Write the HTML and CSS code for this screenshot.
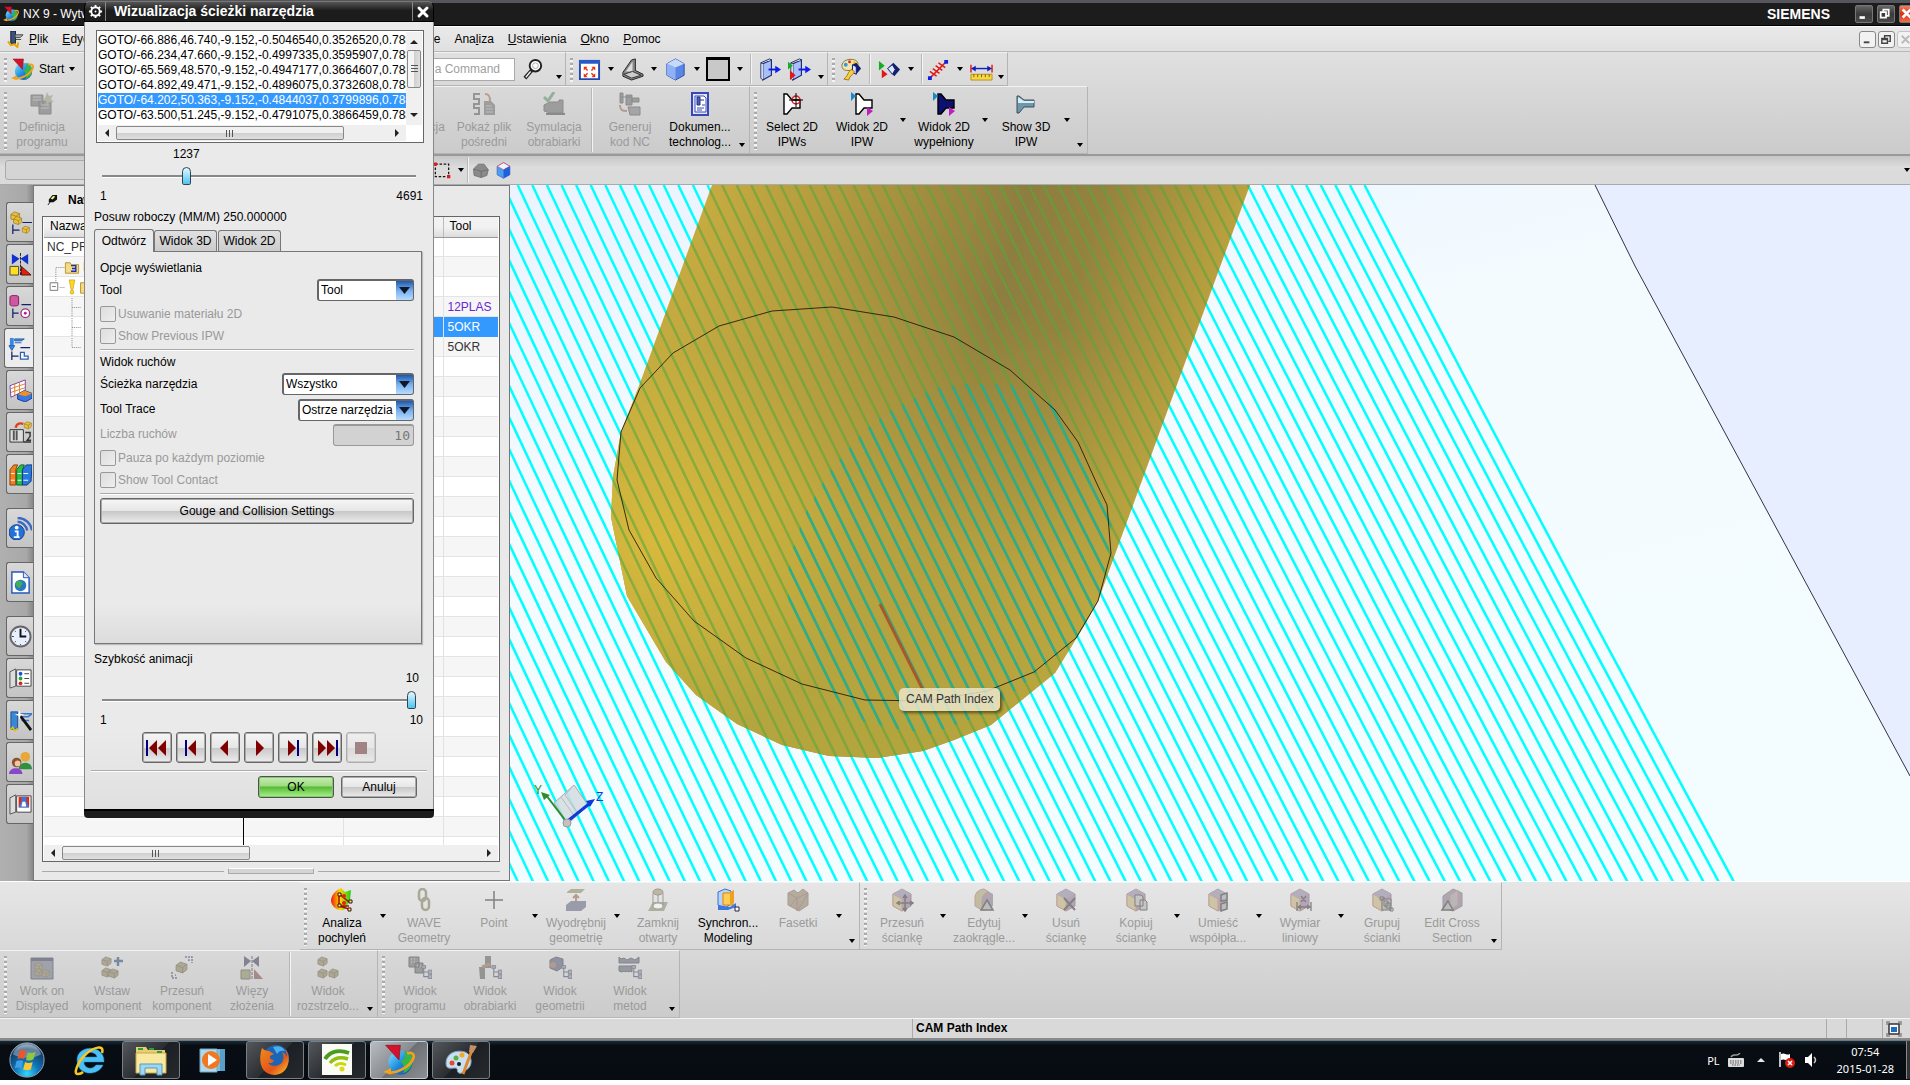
FILE: index.html
```html
<!DOCTYPE html>
<html lang="pl">
<head>
    <meta charset="utf-8">
    <title>NX 9 - Wytwarzanie</title>
    <meta name="viewport" content="width=device-width, initial-scale=1.0">
    <link rel="stylesheet" href="styles.css">
</head>
<body>

<!-- icon sprite -->
<svg class="sprite" aria-hidden="true">
    <defs>
        <linearGradient id="gGlobe" x1="0" y1="0" x2="1" y2="1">
            <stop offset="0" stop-color="#8fe4ff"/><stop offset=".5" stop-color="#1e8fe0"/><stop offset="1" stop-color="#1a3fa0"/>
        </linearGradient>
        <linearGradient id="gHeat" x1="0" y1="0" x2="1" y2="0">
            <stop offset="0" stop-color="#f01c10"/><stop offset=".45" stop-color="#ffd800"/><stop offset="1" stop-color="#18d020"/>
        </linearGradient>
        <linearGradient id="gFox" x1="0" y1="0" x2="1" y2="1">
            <stop offset="0" stop-color="#f08a1c"/><stop offset=".6" stop-color="#e2541a"/><stop offset="1" stop-color="#ffcf2a"/>
        </linearGradient>
        <radialGradient id="gOrb" cx=".5" cy=".9" r=".9">
            <stop offset="0" stop-color="#2fd8ff"/><stop offset=".4" stop-color="#1273b4"/><stop offset=".8" stop-color="#0e3c66"/><stop offset="1" stop-color="#8fa8ba"/>
        </radialGradient>
    </defs>
    <symbol id="nx" viewBox="0 0 24 24">
        <circle cx="13" cy="14" r="9" fill="url(#gGlobe)"/>
        <path d="M13 13c4-2 4-5 3-8 4 1 6 4 6 8s-3 8-7 9c2-3 1-6-2-9z" fill="#35b54a"/>
        <path d="M3 21c6 2 18-4 20-11 .4-3-2-4-5-3" fill="none" stroke="#f0a21c" stroke-width="2"/>
        <path d="M0 21l6-3v5z" fill="#f0a21c"/>
        <path d="M2 1l11 0-1 11z" fill="#d3122c" stroke="#8c0a1c" stroke-width=".5"/>
    </symbol>
    <symbol id="cube" viewBox="0 0 24 24">
        <path d="M12 1l9 5v12l-9 5-9-5V6z" fill="#5c86e4" stroke="#2a4aa8"/>
        <path d="M3 6l9 4v13l-9-5z" fill="#8fb2f6"/><path d="M3 6l9-5 9 5-9 4z" fill="#c6dafc"/>
    </symbol>
    <symbol id="face" viewBox="0 0 24 24">
        <path d="M12 1l9 5v12l-9 5-9-5V6z" fill="#94649a" stroke="#6d5070"/>
        <path d="M3 6l9 5v12l-9-5z" fill="#c0a850" stroke="#c0603c"/><path d="M3 6l9-5 9 5-9 5z" fill="#8878a0"/>
    </symbol>
    <symbol id="brick" viewBox="0 0 12 12">
        <path d="M1 4l4-3 6 2v5l-4 3-6-2z" fill="#e8c040" stroke="#94741c" stroke-width=".8"/>
        <path d="M1 4l6 2v5M7 6l4-3" fill="none" stroke="#94741c" stroke-width=".8"/>
    </symbol>
    <symbol id="greybrick" viewBox="0 0 12 12">
        <path d="M1 4l4-3 6 2v5l-4 3-6-2z" fill="#8c7a48" stroke="#5c4c28" stroke-width=".8"/>
        <path d="M1 4l6 2v5M7 6l4-3" fill="none" stroke="#5c4c28" stroke-width=".8"/>
    </symbol>
    <symbol id="nodes" viewBox="0 0 12 16">
        <path d="M3 4v9h5M3 8h5" fill="none" stroke="#33406a" stroke-width="1.2"/>
        <path d="M1 1h4v3H1zM8 6h4v4H8zM8 11h4v4H8z" fill="#8890a8" stroke="#33406a"/>
    </symbol>
    <symbol id="cone" viewBox="0 0 24 24">
        <path d="M4 2h3l5 6h8v8h-8l-5 6H4z" stroke="#000" stroke-width="1.4"/>
    </symbol>
    <symbol id="plane" viewBox="0 0 24 24">
        <path d="M5 6l9-4v16l-9 5z" fill="#a8c0f8" stroke="#1c2a6c" stroke-width="1.2"/>
        <path d="M5 6L3 5v16l2 2M3 5l9-4 2 1" fill="#fff" stroke="#1c2a6c"/>
        <path d="M11 12h9" stroke="#0a1cf0" stroke-width="2"/><path d="M18 8l6 4-6 4z" fill="#0a1cf0"/>
    </symbol>
    <symbol id="folder" viewBox="0 0 16 14">
        <path d="M1 2h5l1 2h8v9H1z" fill="#f4dc84" stroke="#b8942c"/>
    </symbol>
    <symbol id="book" viewBox="0 0 24 24">
        <path d="M1 5l6-3v18l-6 2z" fill="#ddd" stroke="#555"/><path d="M8 3h15v17H8z" fill="#fff" stroke="#444"/>
    </symbol>
</svg>

<div class="desktop">

    <header class="titlebar">
        <svg class="app-icon"><use href="#nx"/></svg>
        <span class="app-title">NX 9 - Wytwarzanie</span>
        <span class="brand">SIEMENS</span>
        <div class="win-buttons">
            <button class="win-btn" aria-label="Minimalizuj"><svg viewBox="0 0 18 18"><path d="M4 13h6" stroke="#fff" stroke-width="3"/></svg></button>
            <button class="win-btn" aria-label="Przywróć"><svg viewBox="0 0 18 18"><path d="M6 6V4h6v7h-3M3 7h6v6H3z" fill="none" stroke="#fff" stroke-width="2"/></svg></button>
            <button class="win-btn win-close" aria-label="Zamknij"><svg viewBox="0 0 18 18"><path d="M3 4l9 9M12 4l-9 9" stroke="#fff" stroke-width="3"/></svg></button>
        </div>
    </header>

    <nav class="menubar">
        <svg class="menu-icon" viewBox="0 0 18 18"><path d="M4 0h5v13H4z" fill="#3c5078" stroke="#14203c"/><path d="M9 4h8l-3 3H9M9 9h6" stroke="#444" fill="#aaa"/><path d="M1 11l3 4 4-1 3 3 1-5" stroke="#e8a800" stroke-width="2" fill="none"/></svg>
        <a href="#"><u>P</u>lik</a>
        <a href="#"><u>E</u>dycja</a>
        <span class="menu-gap"></span>
        <a href="#">I<u>n</u>formacje</a>
        <a href="#">Ana<u>l</u>iza</a>
        <a href="#"><u>U</u>stawienia</a>
        <a href="#"><u>O</u>kno</a>
        <a href="#"><u>P</u>omoc</a>
        <div class="doc-buttons">
            <button class="doc-btn" aria-label="Minimalizuj dokument"><svg viewBox="0 0 16 16"><path d="M4 11h6" stroke="#444" stroke-width="2"/></svg></button>
            <button class="doc-btn" aria-label="Przywróć dokument"><svg viewBox="0 0 16 16"><path d="M6 6V4h6v6h-2M3 7h6v5H3zM3 8h6" fill="none" stroke="#444" stroke-width="1.5"/></svg></button>
            <button class="doc-btn" aria-label="Zamknij dokument" disabled><svg viewBox="0 0 16 16"><path d="M4 4l8 8M12 4l-8 8" stroke="#bbb" stroke-width="2"/></svg></button>
        </div>
    </nav>

    <div class="ribbon">
        <div class="tb-row small">
            <div class="tb-group">
                <i class="grip"></i>
                <button class="start-cmd"><svg><use href="#nx"/></svg>Start<i class="arrow"></i></button>
                <div class="find-slot"><input class="find" type="text" placeholder="Find a Command" aria-label="Find a Command"></div>
                <button class="ic find-btn" aria-label="Szukaj"><svg viewBox="0 0 24 24"><circle cx="14" cy="8" r="6" fill="#fff" stroke="#222" stroke-width="2"/><circle cx="14" cy="8" r="3" fill="none" stroke="#aaa"/><path d="M10 13l-7 8" stroke="#222" stroke-width="4"/><path d="M9 14l-5 6" stroke="#eee" stroke-width="1.5"/></svg></button>
                <button class="more" aria-label="Więcej"><i class="arrow"></i></button>
            </div>
            <div class="tb-group">
                <i class="grip"></i>
                <button class="ic" aria-label="Dopasuj"><svg viewBox="0 0 24 24"><path d="M2 3h20v19H2z" fill="#fff" stroke="#2048b0" stroke-width="2"/><path d="M1 2h22v4H1z" fill="#2858c8"/><path d="M6 9h4l-4 4zM18 9v4l-4-4zM6 20v-4l4 4zM18 20h-4l4-4z" fill="#e83010"/><path d="M7 10l3 3M17 10l-3 3M7 19l3-3M17 19l-3-3" stroke="#e83010" stroke-width="1.5"/></svg></button>
                <button class="drop" aria-label="Rozwiń"><i class="arrow"></i></button>
                <button class="ic" aria-label="Orientacja"><svg viewBox="0 0 24 24"><path d="M2 15L11 2l4-1v12l8 4v2l-12 4-9-4z" fill="#888" stroke="#222"/><path d="M5 14l7-10v10z" fill="#ddd"/><path d="M3 17l9-3 9 4-10 3z" fill="#ccc" stroke="#333"/></svg></button>
                <button class="drop" aria-label="Rozwiń"><i class="arrow"></i></button>
                <button class="ic" aria-label="Styl renderowania"><svg><use href="#cube"/></svg></button>
                <button class="drop" aria-label="Rozwiń"><i class="arrow"></i></button>
                <button class="ic" aria-label="Tło"><span class="swatch"></span></button>
                <button class="drop" aria-label="Rozwiń"><i class="arrow"></i></button>
                <i class="sep"></i>
                <button class="ic wide" aria-label="Przekrój"><svg><use href="#plane"/></svg></button>
                <button class="ic wide" aria-label="Edytuj przekrój"><svg viewBox="0 0 24 24"><use href="#plane"/><path d="M0 4l5 4-5 4z" fill="#10b020"/><path d="M2 13l6 5-6 5z" fill="#e01818"/></svg></button>
                <button class="more" aria-label="Więcej"><i class="arrow"></i></button>
            </div>
            <div class="tb-group">
                <i class="grip"></i>
                <button class="ic" aria-label="Wyświetlanie"><svg viewBox="0 0 24 24"><path d="M2 8c0-5 7-8 13-6 4 1 5 5 2 7-2 2-5 1-5 4H7C4 13 2 11 2 8z" fill="#f4e4b0" stroke="#887030"/><circle cx="6" cy="7" r="2" fill="#28a0e0"/><circle cx="10" cy="4" r="1.6" fill="#e03020"/><circle cx="15" cy="5" r="1.6" fill="#f0c010"/><path d="M13 7l4-2 5 6-5 6-4-2z" fill="#101c70"/><path d="M13 7v8l4 2V9z" fill="#dce6ff" stroke="#101c70"/><path d="M12 12c-4 2-3 6-8 10l5 1c1-5 6-6 6-9z" fill="#f4d040" stroke="#a07810"/></svg></button>
                <i class="sep roomy"></i>
                <button class="ic" aria-label="Pokaż i ukryj"><svg viewBox="0 0 24 24"><path d="M1 3l6 5-6 5z" fill="#10b020"/><path d="M4 12l6 5-6 4z" fill="#e01818"/><path d="M10 11l6-6 7 7-6 7z" fill="#14206c"/><path d="M10 11l5-4 3 5-3 5z" fill="#dce6ff" stroke="#14206c"/></svg></button>
                <button class="drop" aria-label="Rozwiń"><i class="arrow"></i></button>
                <i class="sep"></i>
                <button class="ic" aria-label="Zmierz"><svg viewBox="0 0 24 24"><path d="M3 21L20 4" stroke="#e01818" stroke-width="1.5"/><path d="M3 14l7 5M6 11l7 5M9 8l7 5M12 5l7 5" stroke="#e01818" stroke-width="1.5"/><path d="M1 19h4v4H1zM18 2h4v4h-4z" fill="#1020e0"/></svg></button>
                <button class="drop" aria-label="Rozwiń"><i class="arrow"></i></button>
                <button class="ic" aria-label="Odległość"><svg viewBox="0 0 24 24"><path d="M1 7v8M23 7v8" stroke="#e01818" stroke-width="1.5"/><path d="M3 11h18" stroke="#1020c0" stroke-width="1.5"/><path d="M1 11l5-3v6zM23 11l-5-3v6z" fill="#1020c0"/><path d="M1 17h22v6H1z" fill="#f4d848" stroke="#b89010"/><path d="M4 17v3M8 17v3M12 17v3M16 17v3M20 17v3" stroke="#806000"/></svg></button>
                <button class="more" aria-label="Więcej"><i class="arrow"></i></button>
            </div>
        </div>

        <div class="tb-row">
            <div class="tb-group">
                <i class="grip"></i>
                <button class="cmd" disabled><svg viewBox="0 0 24 24"><path d="M1 3h12v11H1zM9 9h12v13H9z" fill="#686868" stroke="#444"/><path d="M3 5h8M3 8h8M11 13h8M11 16h8" stroke="#aaa"/><path d="M17 0l2 4 4-1-2 4 3 3-5 0-2 4-1-5-4-1 3-2z" fill="#9a9468"/></svg>Definicja programu</button>
                <span class="tb-gap"></span>
                <button class="cmd" disabled><svg viewBox="0 0 24 24"><path d="M4 4h16v16H4z" fill="#888"/></svg>Weryfikacja ścieżki</button>
                <button class="cmd" disabled><svg viewBox="0 0 24 24"><path d="M8 2H2v5h5v5H2v4h5v6H2" fill="none" stroke="#555" stroke-width="2"/><path d="M12 9h7l4 4v10H12z" fill="#666"/><path d="M14 14h6M14 17h7M14 20h7" stroke="#aaa"/><path d="M13 2c4 0 5 2 5 7" fill="none" stroke="#a86038" stroke-width="2"/></svg>Pokaż plik pośredni</button>
                <button class="cmd" disabled><svg viewBox="0 0 24 24"><path d="M2 13l6-3h9v-2h4v13H8l-6-2z" fill="#666" stroke="#444"/><path d="M4 22h19" stroke="#444" stroke-width="2"/><path d="M2 5l4 4 6-9" fill="none" stroke="#3f8f50" stroke-width="3"/></svg>Symulacja obrabiarki</button>
                <i class="sep"></i>
                <button class="cmd" disabled><svg viewBox="0 0 24 24"><path d="M2 1h3v10H2zM2 5h12M8 3h6v10H8zM14 6h7v4h-7z" fill="#666" stroke="#444"/><path d="M10 15h12v8H12z" fill="#777" stroke="#444"/><path d="M2 13c0 5 2 6 7 6" fill="none" stroke="#a86038" stroke-width="2"/></svg>Generuj kod&nbsp;NC</button>
                <button class="cmd"><svg viewBox="0 0 24 24"><path d="M4 1h16v22H4z" fill="#dfe6fc" stroke="#3848b8" stroke-width="2"/><path d="M7 4h9l2 2v14H7z" fill="#fff" stroke="#3848b8"/><path d="M9 5h3v8H9zM12 8h4" stroke="#24307c" fill="#4860c0"/><path d="M9 16h7M9 18h5M14 13h3" stroke="#3848b8"/></svg>Dokumen... technolog...</button>
                <button class="more" aria-label="Więcej"><i class="arrow"></i></button>
            </div>
            <div class="tb-group">
                <i class="grip"></i>
                <button class="cmd"><svg viewBox="0 0 24 24"><use href="#cone" fill="#fff"/><circle cx="16" cy="8" r="4" fill="none" stroke="#e01818" stroke-width="1.5"/><path d="M16 1v14M9 8h14" stroke="#000"/></svg>Select 2D IPWs</button>
                <button class="cmd"><svg viewBox="0 0 24 24"><use href="#cone" fill="#fff" x="2"/><path d="M1 0l5 4-5 5z" fill="#1888c8"/><path d="M17 15l6 4-6 5z" fill="#c020c0"/></svg>Widok 2D IPW</button>
                <button class="drop" aria-label="Rozwiń"><i class="arrow"></i></button>
                <button class="cmd"><svg viewBox="0 0 24 24"><use href="#cone" fill="#0c1070" x="2"/><path d="M1 0l5 4-5 5z" fill="#1888c8"/><path d="M17 15l6 4-6 5z" fill="#c020c0"/></svg>Widok 2D wypełniony</button>
                <button class="drop" aria-label="Rozwiń"><i class="arrow"></i></button>
                <button class="cmd"><svg viewBox="0 0 24 24"><path d="M3 4h2l5 4h10v7H10l-5 6H3z" fill="#6f97ab" stroke="#38505c"/><path d="M4 5l6 4h10v2H4z" fill="#d8ecf6"/></svg>Show 3D IPW</button>
                <button class="drop" aria-label="Rozwiń"><i class="arrow"></i></button>
                <button class="more" aria-label="Więcej"><i class="arrow"></i></button>
            </div>
        </div>
    </div>

    <div class="selection-bar">
        <div class="sel-field"></div>
        <button class="ic" aria-label="Prostokąt wyboru"><svg viewBox="0 0 24 24"><path d="M4 5h16v15H4z" fill="none" stroke="#111" stroke-width="1.5" stroke-dasharray="3 2"/><path d="M2 3h4v4H2zM18 18h4v4h-4z" fill="#e01818"/></svg></button>
        <button class="drop" aria-label="Rozwiń"><i class="arrow"></i></button>
        <i class="sep"></i>
        <button class="ic sm" aria-label="Bryła"><svg viewBox="0 0 24 24"><path d="M2 10l7-7h8l6 8-2 8-8 3-10-3z" fill="#8a8a8a" stroke="#666"/><path d="M2 10l11 3v9M13 13l10-2" fill="none" stroke="#666"/></svg></button>
        <button class="ic sm" aria-label="Krawędzie"><svg viewBox="0 0 24 24"><path d="M12 1l9 5v12l-9 5-9-5V6z" fill="#48a0f0" stroke="#4060c0"/><path d="M3 6l9-5 9 5-9 5z" fill="#f0f4ff" stroke="#e04060"/><path d="M12 11v12l9-5V6z" fill="#2060d8"/></svg></button>
        <i class="arrow bar-end"></i>
    </div>

    <main class="workspace">
        <aside class="rail">
            <button class="rail-tab" aria-label="Nawigator złożenia"><svg viewBox="0 0 24 24"><use href="#brick" x="1" y="0" width="11" height="11"/><use href="#brick" x="4" y="5" width="10" height="10"/><use href="#brick" x="13" y="15" width="9" height="9"/><path d="M4 14v10M4 20h7M14 12h10" stroke="#14206c" stroke-width="1.3"/></svg></button>
            <button class="rail-tab" aria-label="Nawigator więzów"><svg viewBox="0 0 24 24"><path d="M3 1l8 5-8 6zM20 1l-8 5 8 6z" fill="#1030d0"/><path d="M1 14h9v9H1z" fill="#ffe020" stroke="#444"/><path d="M13 14v9h10z" fill="#e02010" stroke="#601008"/><path d="M12 0v24" stroke="#222" stroke-dasharray="3 1"/></svg></button>
            <button class="rail-tab" aria-label="Nawigator części"><svg viewBox="0 0 24 24"><path d="M1 2c0-2 9-2 9 0v8c0 2-9 2-9 0z" fill="#d058a0" stroke="#7a2060"/><path d="M4 14v10M4 19h6M13 10h10" stroke="#14206c" stroke-width="1.3"/><circle cx="17" cy="19" r="4.5" fill="#fff" stroke="#a03080" stroke-width="1.3"/><circle cx="17" cy="19" r="1.5" fill="#a03080"/></svg></button>
            <button class="rail-tab active" aria-label="Nawigator operacji"><svg viewBox="0 0 24 24"><path d="M2 1h4v9H2z" fill="#3a8ae0"/><path d="M1 9h6l-3 5zM7 2h10l-3 2H7zM7 6h7" fill="#3a8ae0" stroke="#2860b0"/><path d="M4 15v9M4 20h7M13 11h10" stroke="#14206c" stroke-width="1.3"/><path d="M13 16h4v4h4v3h-8z" fill="#fff" stroke="#2860b0" stroke-width="1.3"/></svg></button>
            <button class="rail-tab" aria-label="Obrabiarka"><svg viewBox="0 0 24 24"><path d="M1 7l16-6v11L2 19z" fill="#fff" stroke="#7a40b0"/><path d="M2 10l15-5M2 14l15-5M6 5v12M11 3v12" stroke="#e08030"/><path d="M9 16l7-4 8 3v5l-7 4-8-3z" fill="#3878e0" stroke="#1c3c90"/><path d="M9 16l7-4 8 3-7 3z" fill="#f09020"/></svg></button>
            <button class="rail-tab" aria-label="Symulacja"><svg viewBox="0 0 24 24"><path d="M1 9h14v13H1z" fill="#ddd" stroke="#333"/><path d="M5 10v10M8 10v10" stroke="#555" stroke-width="2"/><path d="M7 7c1-5 5-5 8-4" fill="none" stroke="#e04018" stroke-width="2.5"/><use href="#brick" x="15" y="0" width="9" height="9"/><path d="M17 12h5v4l-3 4h4M15 22h8" fill="none" stroke="#333" stroke-width="1.5"/></svg></button>
            <button class="rail-tab" aria-label="Biblioteka"><svg viewBox="0 0 24 24"><path d="M1 7l4-5h4L7 7v16H1z" fill="#f08020" stroke="#884008"/><path d="M8 7l4-5h4l-2 5v16H8z" fill="#28c048" stroke="#106020"/><path d="M14 7l4-5h6l-1 17-4 4h-5z" fill="#2878e0" stroke="#103880"/><path d="M2 11h4M9 11h4M15 11h5M2 18h4M9 18h4M15 18h5" stroke="#fff"/></svg></button>
            <button class="rail-tab spaced" aria-label="Informacje"><svg viewBox="0 0 24 24"><circle cx="8" cy="16" r="8" fill="#2272d8" stroke="#0c3c88"/><path d="M6 15h3v6M5 21h6" stroke="#fff" stroke-width="2" fill="none"/><circle cx="8" cy="11" r="2" fill="#fff"/><path d="M9 5c5 0 9 4 10 9M9 1c8 0 14 6 15 13" fill="none" stroke="#3a68c0" stroke-width="2.5"/></svg></button>
            <button class="rail-tab spaced" aria-label="Przeglądarka"><svg viewBox="0 0 24 24"><path d="M3 1h12l6 6v16H3z" fill="#fff" stroke="#2858b8" stroke-width="1.5"/><path d="M15 1v6h6" fill="#dce8ff" stroke="#2858b8"/><circle cx="12" cy="15" r="6" fill="#2878c8"/><path d="M8 11c3-2 6 0 6 2s-3 2-2 5c-4 0-6-4-4-7z" fill="#40b050"/></svg></button>
            <button class="rail-tab spaced" aria-label="Historia"><svg viewBox="0 0 24 24"><circle cx="12" cy="12" r="10.5" fill="#e8f0ff" stroke="#666" stroke-width="2"/><path d="M12 4v8h6" fill="none" stroke="#111" stroke-width="2"/><path d="M12 20v1M3 12h2M6 6l1 1M18 6l-1 1M6 18l1-1M18 18l-1-1" stroke="#333"/></svg></button>
            <button class="rail-tab" aria-label="Materiały"><svg viewBox="0 0 24 24"><use href="#book"/><circle cx="12" cy="7" r="2" fill="#2050e0"/><circle cx="12" cy="12" r="2" fill="#18b030"/><circle cx="12" cy="17" r="2" fill="#e02020"/><path d="M16 7h5M16 12h5M16 17h5" stroke="#444"/></svg></button>
            <button class="rail-tab" aria-label="Kreator"><svg viewBox="0 0 24 24"><path d="M2 3h7v18H2z" fill="#3888d8" stroke="#205090"/><path d="M11 5h13l-4 3h-6M13 12h8" stroke="#3a78d0" fill="none" stroke-width="1.5"/><path d="M11 6l12 16" stroke="#111" stroke-width="3"/><path d="M11 1l1 4 4 1-4 1-1 4-1-4-4-1 4-1z" fill="#fff"/><path d="M1 22l3-3 2 4 3-3" stroke="#f0c010" stroke-width="1.5" fill="none"/></svg></button>
            <button class="rail-tab" aria-label="Role"><svg viewBox="0 0 24 24"><circle cx="17" cy="6" r="5" fill="#e8a838"/><path d="M10 19c0-9 14-9 14 0z" fill="#2f9040"/><circle cx="8" cy="12" r="5" fill="#8a5038"/><circle cx="9" cy="13" r="3" fill="#f0c8a0"/><path d="M0 24c0-8 14-8 14 0z" fill="#8848c8"/></svg></button>
            <button class="rail-tab" aria-label="Szablony"><svg viewBox="0 0 24 24"><use href="#book"/><path d="M10 4h11v11H10z" fill="#e02818"/><path d="M13 4h5v4l3 7H10l3-7z" fill="#3878d8"/><path d="M14 9l3 0 1 5h-5z" fill="#fff"/></svg></button>
        </aside>

        <section class="navigator">
            <h2 class="nav-title"><svg viewBox="0 0 12 12"><path d="M2 6l4-5h5v5L7 9H2z" fill="#111"/><path d="M4 5l3-3 2 1-3 3z" fill="#f0f080"/><path d="M4 8l-3 4" stroke="#111"/></svg>Nawigator operacji</h2>
            <div class="tree-box">
                <div class="tree-scroll">
                    <table class="tree">
                        <thead>
                            <tr><th class="c-name">Nazwa</th><th class="c-mid"></th><th class="c-mid"></th><th>Tool</th></tr>
                        </thead>
                        <tbody>
                            <tr><td>NC_PROGRAM</td><td></td><td></td><td></td></tr>
                            <tr><td><svg class="tree-ic" viewBox="0 0 50 20"><path d="M8 20V10h10" fill="none" stroke="#888" stroke-dasharray="1 1"/><use href="#folder" x="17" y="3" width="16" height="14"/><path d="M24 8h5v6h-5M25 11h4" fill="none" stroke="#1830c0" stroke-width="1.5"/></svg>NIEUŻYTE</td><td></td><td></td><td></td></tr>
                            <tr><td><svg class="tree-ic" viewBox="0 0 50 20"><path d="M8 0v5M12 10h5" stroke="#888" stroke-dasharray="1 1"/><path d="M2 5h8v8H2zM4 9h4" fill="#fff" stroke="#777"/><path d="M22 2h6l-2 10h-2z" fill="#ffd820" stroke="#a88000" stroke-width=".5"/><circle cx="25" cy="15" r="2" fill="#ffd820" stroke="#a88000" stroke-width=".5"/><use href="#folder" x="33" y="3" width="16" height="14"/></svg></td><td></td><td></td><td></td></tr>
                            <tr><td><svg class="tree-ic" viewBox="0 0 50 20"><path d="M25 0v20M25 10h10" stroke="#888" stroke-dasharray="1 1"/></svg></td><td></td><td></td><td class="violet">12PLAS</td></tr>
                            <tr class="picked"><td><svg class="tree-ic" viewBox="0 0 50 20"><path d="M25 0v20M25 10h10" stroke="#888" stroke-dasharray="1 1"/></svg></td><td></td><td></td><td>5OKR</td></tr>
                            <tr><td><svg class="tree-ic" viewBox="0 0 50 20"><path d="M25 0v10h10" fill="none" stroke="#888" stroke-dasharray="1 1"/></svg></td><td></td><td></td><td>5OKR</td></tr>
                            <tr class="rest"><td></td><td></td><td></td><td></td></tr>
                        </tbody>
                    </table>
                </div>
                <div class="hbar"><i class="tri left"></i><div class="hbar-track"><div class="hbar-thumb nav-thumb"></div></div><i class="tri right"></i></div>
            </div>
            <div class="splitter"><i></i></div>
        </section>

        <section class="viewport">
            <svg class="scene" viewBox="510 185 1400 697" preserveAspectRatio="xMinYMin slice">
                <defs>
                    <linearGradient id="bg" x1="0" y1="0" x2=".5" y2="1">
                        <stop offset="0" stop-color="#eaf3ff"/><stop offset=".4" stop-color="#f3fbff"/><stop offset="1" stop-color="#f3fcff"/>
                    </linearGradient>
                    <linearGradient id="body" gradientUnits="userSpaceOnUse" x1="680" y1="300" x2="1190" y2="440">
                        <stop offset="0" stop-color="#c6ab40"/><stop offset=".25" stop-color="#b0993f"/><stop offset=".58" stop-color="#8d7d40"/><stop offset=".72" stop-color="#94833f"/><stop offset="1" stop-color="#bda43f"/>
                    </linearGradient>
                    <linearGradient id="fade" gradientUnits="userSpaceOnUse" x1="960" y1="290" x2="800" y2="760">
                        <stop offset="0" stop-color="#bda63f" stop-opacity="0"/><stop offset=".5" stop-color="#c2ab40" stop-opacity=".75"/><stop offset="1" stop-color="#b3a53e"/>
                    </linearGradient>
                    <radialGradient id="shine" gradientUnits="userSpaceOnUse" cx="660" cy="540" r="200">
                        <stop offset="0" stop-color="#d8b93c"/><stop offset="1" stop-color="#d0b83e" stop-opacity="0"/>
                    </radialGradient>
                    <path id="cutter" d="M712 185L639 386 621 432 613 477 611 517 627 596 666 662 696 695 737 724 782 745 829 756 877 758 923 751 954 740 991 725 1055 673 1084 626 1098 601 1118 546 1250 185z"/>
                    <clipPath id="inCutter"><use href="#cutter"/></clipPath>
                    <clipPath id="inContact"><path d="M934 389L962 384 1010 385 1041 399 1061 410 1087 452 1110 501 1112 537 1099 597 1076 640 1034 675 990 712 931 734 898 729 865 722 844 709 798 644 788 602 788 571 793 548 806 512 829 472 865 430 888 412 911 400z"/></clipPath>
                    <path id="passes"/>
                </defs>
                <path d="M510 185h1400v697H510z" fill="url(#bg)"/>
                <path d="M1595 185L1635 266 1910 776V185z" fill="#e6eeff"/>
                <path d="M1595 185L1635 266 1910 776" fill="none" stroke="#334" stroke-width="1"/>
                <use href="#passes" class="pass"/>
                <use href="#cutter" fill="url(#body)"/>
                <use href="#cutter" fill="url(#fade)"/>
                <use href="#cutter" fill="url(#shine)"/>
                <g clip-path="url(#inCutter)"><use href="#passes" class="pass-hidden"/></g>
                <g clip-path="url(#inContact)"><use href="#passes" class="pass-contact"/></g>
                <path class="rim" d="M640 388L673 353 719 326 772 311 832 307 894 317 954 337 1010 370 1055 410 1078 442 1097 484 1107 505 1111 553 1098 601 1076 638 1034 672 987 691 926 701 865 700 802 684 746 658 694 621 656 578 629 530 617 480 621 432z"/>
                <path d="M880 604l43 86" stroke="#a8582a" stroke-width="3"/>
                <g class="triad">
                    <path d="M554 803l20-18 14 20-20 19z" fill="#d4dce0" fill-opacity=".85" stroke="#aaa"/>
                    <path d="M561 797l14 20M574 785l-9 10 13 18" fill="none" stroke="#bbb"/>
                    <path d="M565 820l-19-25" stroke="#2c8c2c" stroke-width="2"/><path d="M541 792l9 3-6 5z" fill="#2c8c2c"/>
                    <path d="M569 820l20-16" stroke="#1038d8" stroke-width="3"/><path d="M595 799l-9 2 4 6z" fill="#1038d8"/>
                    <circle cx="567" cy="823" r="4" fill="#c8c0c0" stroke="#999"/>
                    <text x="534" y="794" fill="#2c8c2c">Y</text><text x="596" y="801" fill="#1038d8">Z</text>
                </g>
            </svg>
            <div class="tip">CAM Path Index</div>
        </section>
    </main>

    <div class="ribbon bottom">
        <div class="tb-row indent">
            <div class="tb-group">
                <i class="grip"></i>
                <button class="cmd"><svg viewBox="0 0 24 24"><path d="M1 13C1 7 6 2 11 0l4 4 6-2-1 11-6 9C7 23 2 19 1 13z" fill="url(#gHeat)"/><path d="M9 6v12h10M9 6l10 8M9 18l10 3" fill="none" stroke="#a01010" stroke-width="1.5"/><path d="M8 5h3v3H8zM8 16h3v3H8zM19 12h3v3h-3zM18 20h3v3h-3z" fill="#ffe890" stroke="#401008"/><circle cx="14" cy="8" r="2" fill="#e82010"/><circle cx="14" cy="15" r="2" fill="#e82010"/></svg>Analiza pochyleń</button>
                <button class="drop" aria-label="Rozwiń"><i class="arrow"></i></button>
                <button class="cmd" disabled><svg viewBox="0 0 24 24"><rect x="7" y="1" width="7" height="12" rx="3.5" fill="none" stroke="#707040" stroke-width="2.5"/><rect x="10" y="10" width="7" height="12" rx="3.5" fill="none" stroke="#707040" stroke-width="2.5"/></svg>WAVE Geometry</button>
                <button class="cmd" disabled><svg viewBox="0 0 24 24"><path d="M12 3v18M3 12h18" stroke="#222" stroke-width="1.5"/></svg>Point</button>
                <button class="drop" aria-label="Rozwiń"><i class="arrow"></i></button>
                <button class="cmd" disabled><svg viewBox="0 0 24 24"><path d="M3 4l4-3h14l-4 4H3z" fill="#808040"/><path d="M12 7v8M9 10l3-3 3 3" stroke="#a05030" stroke-width="2" fill="none"/><path d="M2 17l5-4h15v6l-5 4H2z" fill="#50587c"/></svg>Wyodrębnij geometrię</button>
                <button class="drop" aria-label="Rozwiń"><i class="arrow"></i></button>
                <button class="cmd" disabled><svg viewBox="0 0 24 24"><path d="M2 23l5-9h15l-4 9z" fill="#808050"/><ellipse cx="12" cy="4" rx="5" ry="3" fill="#90904c" stroke="#883c30"/><ellipse cx="12" cy="18" rx="5" ry="3" fill="#fff" stroke="#666"/><path d="M7 5v12M17 5v12M12 7v8" stroke="#555"/></svg>Zamknij otwarty</button>
                <button class="cmd"><svg viewBox="0 0 24 24"><path d="M2 4l7-3 6 2v13l-6 4-7-3z" fill="#b8d4fc" stroke="#3870d0"/><path d="M7 5h10v12H7z" fill="#ffd050" stroke="#e08010"/><path d="M14 4l4-2v12l-4 3z" fill="#f0a020"/><path d="M2 17l12 2 6-4v4l-8 3H2z" fill="#3c78e0"/><path d="M19 19h4v4h-4z" fill="#fff" stroke="#224"/></svg>Synchron... Modeling</button>
                <button class="cmd" disabled><svg viewBox="0 0 24 24"><path d="M2 5l6-3 4 3 5-4 5 4v12l-9 6-11-6z" fill="#8a7850" stroke="#805038"/><path d="M2 5l9 5v13M11 10l11-5M11 10l-7 8M12 22l9-15" stroke="#904830" fill="none"/></svg>Fasetki</button>
                <button class="drop" aria-label="Rozwiń"><i class="arrow"></i></button>
                <button class="more" aria-label="Więcej"><i class="arrow"></i></button>
            </div>
            <div class="tb-group">
                <i class="grip"></i>
                <button class="cmd" disabled><svg viewBox="0 0 24 24"><use href="#face"/><path d="M15 8v15M8 15h15M13 10l2-3 2 3M13 20l2 3 2-3M10 13l-3 2 3 2M20 13l3 2-3 2" fill="none" stroke="#222" stroke-width="1.5"/></svg>Przesuń ściankę</button>
                <button class="drop" aria-label="Rozwiń"><i class="arrow"></i></button>
                <button class="cmd" disabled><svg viewBox="0 0 24 24"><path d="M3 18V9c0-5 5-8 9-8l9 5v12l-9 5z" fill="#806890"/><path d="M3 9c0-4 5-8 9-8l5 3c-4 0-7 4-7 9v9l-7-4z" fill="#a89850" stroke="#b0603c"/><path d="M15 12l6 10H9z" fill="#999" stroke="#222" stroke-width="1.5"/></svg>Edytuj zaokrągle...</button>
                <button class="drop" aria-label="Rozwiń"><i class="arrow"></i></button>
                <button class="cmd" disabled><svg viewBox="0 0 24 24"><use href="#face"/><path d="M10 10l11 12M21 10L10 22" stroke="#222" stroke-width="2"/></svg>Usuń ściankę</button>
                <button class="cmd" disabled><svg viewBox="0 0 24 24"><use href="#face"/><path d="M11 7h6l2 2v9h-8zM16 12h5l2 2v8h-7z" fill="#aaa" stroke="#222"/></svg>Kopiuj ściankę</button>
                <button class="drop" aria-label="Rozwiń"><i class="arrow"></i></button>
                <button class="cmd" disabled><svg viewBox="0 0 24 24"><use href="#face"/><path d="M15 7l6-2v7l-6 1zM15 16l6-2v7l-6 2z" fill="#999" stroke="#222" stroke-width="1.5"/></svg>Umieść współpła...</button>
                <button class="drop" aria-label="Rozwiń"><i class="arrow"></i></button>
                <button class="cmd" disabled><svg viewBox="0 0 24 24"><use href="#face"/><path d="M9 14v9M23 14v9M10 19h12M13 17l-3 2 3 2M19 17l3 2-3 2M13 8l5 6M18 8l-5 6" fill="none" stroke="#222" stroke-width="1.3"/></svg>Wymiar liniowy</button>
                <button class="drop" aria-label="Rozwiń"><i class="arrow"></i></button>
                <button class="cmd" disabled><svg viewBox="0 0 24 24"><use href="#face"/><path d="M12 11h9v11h-9z" fill="#999" stroke="#222"/><path d="M14 13h4v5h-4zM16 15h4v5h-4zM10 9h4v3h-4zM20 20h3v3h-3z" fill="none" stroke="#222"/></svg>Grupuj ścianki</button>
                <button class="cmd" disabled><svg viewBox="0 0 24 24"><path d="M3 8l10-7 9 4v13l-9 5-10-3z" fill="#786c8c" stroke="#605070"/><path d="M10 7l8-5v15l-8 5z" fill="#998890" stroke="#b0603c"/><path d="M8 13l5 9H2z" fill="#999" stroke="#222" stroke-width="1.5"/></svg>Edit&nbsp;Cross Section</button>
                <button class="more" aria-label="Więcej"><i class="arrow"></i></button>
            </div>
        </div>
        <div class="tb-row">
            <div class="tb-group">
                <i class="grip"></i>
                <button class="cmd" disabled><svg viewBox="0 0 24 24"><path d="M1 2h22v21H1z" fill="#6a7088" stroke="#28305c"/><path d="M1 2h22v3H1z" fill="#28305c"/><use href="#greybrick" x="4" y="6" width="9" height="9"/><use href="#greybrick" x="4" y="12" width="9" height="9"/><use href="#greybrick" x="11" y="13" width="9" height="9"/></svg>Work on Displayed</button>
                <button class="cmd" disabled><svg viewBox="0 0 24 24"><use href="#greybrick" x="1" y="0" width="11" height="11"/><use href="#greybrick" x="1" y="11" width="11" height="11"/><use href="#greybrick" x="8" y="12" width="11" height="11"/><path d="M18 1v9M14 5h9" stroke="#104080" stroke-width="2.5"/></svg>Wstaw komponent</button>
                <button class="cmd" disabled><svg viewBox="0 0 24 24"><use href="#greybrick" x="5" y="5" width="13" height="13"/><path d="M15 1h7v6M18 4h1v1M2 16v6h6M5 19h1" fill="none" stroke="#303c78" stroke-width="1.5" stroke-dasharray="2 1"/></svg>Przesuń komponent</button>
                <button class="cmd" disabled><svg viewBox="0 0 24 24"><path d="M4 0l7 5-7 6zM19 0l-7 5 7 6z" fill="#303060"/><path d="M1 14h9v9H1z" fill="#888840" stroke="#444"/><path d="M14 13v10h9z" fill="#884038"/><path d="M12 0v24" stroke="#222" stroke-dasharray="3 1"/></svg>Więzy złożenia</button>
                <i class="sep"></i>
                <button class="cmd" disabled><svg viewBox="0 0 24 24"><use href="#greybrick" x="1" y="0" width="11" height="11"/><use href="#greybrick" x="1" y="12" width="11" height="11"/><use href="#greybrick" x="12" y="12" width="11" height="11"/></svg>Widok rozstrzelo...</button>
                <button class="more" aria-label="Więcej"><i class="arrow"></i></button>
            </div>
            <div class="tb-group">
                <i class="grip"></i>
                <button class="cmd" disabled><svg viewBox="0 0 24 24"><path d="M1 1h10v10H1zM7 7h8v10H7z" fill="#666" stroke="#333"/><path d="M3 3h1M6 3h1M3 6h1M6 6h1M9 10h1M12 10h1" stroke="#ccc"/><use href="#nodes" x="13" y="8" width="11" height="16"/></svg>Widok programu</button>
                <button class="cmd" disabled><svg viewBox="0 0 24 24"><path d="M7 0h6v12H7z" fill="#555"/><path d="M1 11h6v12H2z" fill="#555"/><path d="M4 11l8-3" stroke="#a06030" stroke-width="3"/><use href="#nodes" x="13" y="8" width="11" height="16"/></svg>Widok obrabiarki</button>
                <button class="cmd" disabled><svg viewBox="0 0 24 24"><path d="M2 4l6-3 7 2v8l-6 4-7-3z" fill="#485080" stroke="#283050"/><circle cx="5" cy="9" r="3" fill="#a06030"/><use href="#nodes" x="13" y="8" width="11" height="16"/></svg>Widok geometrii</button>
                <button class="cmd" disabled><svg viewBox="0 0 24 24"><path d="M1 1l2 2 3-1 3 2 4-2 4 2 4-3v6H1zM1 10h13v6l-2-1-1 1-2-1-1 1-2-1-2 1-3-1z" fill="#556070" stroke="#28384c"/><use href="#nodes" x="13" y="8" width="11" height="16"/></svg>Widok metod</button>
                <button class="more" aria-label="Więcej"><i class="arrow"></i></button>
            </div>
        </div>
    </div>

    <div class="statusbar">
        <div class="cue"></div>
        <div class="status">CAM Path Index</div>
        <div class="cell-a"></div>
        <div class="cell-b"></div>
        <button class="cell-c" aria-label="Pełny ekran"><svg viewBox="0 0 16 16"><path d="M1 4V1h3M12 1h3v3M15 12v3h-3M4 15H1v-3" fill="none" stroke="#888" stroke-width="1.5"/><path d="M3 3h10v10H3z" fill="#fff" stroke="#333" stroke-width="1.5"/><path d="M5 6h6v5H5z" fill="#1c6cc8"/></svg></button>
    </div>

    <footer class="taskbar">
        <button class="orb" aria-label="Start systemu"><svg viewBox="0 0 40 40"><circle cx="20" cy="20" r="18" fill="url(#gOrb)" stroke="#9ab" stroke-width="1"/><path d="M5 14a16 16 0 0 1 30 0c-8 5-22 5-30 0z" fill="#fff" opacity=".35"/><path d="M12 11c3-2 5-1 7 0l-2 8c-3-1-5-1-7 0z" fill="#f0542c"/><path d="M21 12c3 1 5 1 8-1l-2 8c-3 2-5 2-8 1z" fill="#90c83c"/><path d="M9 21c3-1 5-1 7 0l-2 8c-3-2-5-1-7 0z" fill="#3ca0e8"/><path d="M18 22c3 2 5 1 8 0l-2 8c-3 1-5 1-8 0z" fill="#fcc832"/></svg></button>
        <button class="task" aria-label="Internet Explorer"><svg viewBox="0 0 32 32"><path fill-rule="evenodd" d="M31 18H11c0 7 9 8 12 3h7c-5 12-26 11-26-5C4 0 32 0 31 18zM24 13c-1-6-12-6-13 0z" fill="#4cc0f4" stroke="#2088d0" stroke-width=".5"/><path d="M29 9c3-9-9-6-17 2S0 31 5 30c2 0 4-1 5-2" fill="none" stroke="#f8c820" stroke-width="2.5"/></svg></button>
        <button class="task open" aria-label="Eksplorator"><svg viewBox="0 0 32 32"><path d="M1 3h10l2 3h17v22H1z" fill="#e8cc70"/><path d="M1 9h30v20H1z" fill="#f8e8a0" stroke="#c8a850"/><path d="M3 5h5M14 5h5M22 8h5" stroke="#28a040" stroke-width="2"/><path d="M5 31V20h22v11h-5v-7H10v7z" fill="#9cd8f4" stroke="#5898c0"/></svg></button>
        <button class="task" aria-label="Odtwarzacz"><svg viewBox="0 0 32 32"><path d="M12 5h16v22H12z" fill="#58a0c8"/><path d="M9 5h14v22H9z" fill="#80bcdc"/><path d="M3 5h17v23H3z" fill="#b0d8ec" stroke="#70a8c8"/><circle cx="14" cy="16" r="9" fill="#f07820"/><path d="M11 10l9 6-9 6z" fill="#fff"/></svg></button>
        <button class="task open" aria-label="Firefox"><svg viewBox="0 0 32 32"><circle cx="17" cy="14" r="13" fill="#1c64b4"/><path d="M14 3c6-2 10 0 12 4-4-1-6 0-8 3z" fill="#4cb0e8"/><path d="M3 4c2 2 4 3 7 3l5 3-4 2c0 3 1 4 4 4-1 4-4 3-6 3 4 5 14 3 15-3 1-4 0-6-1-8 3 1 4 3 5 5 0-3-1-6-2-8 6 5 6 25-10 26C1 31-1 16 3 4z" fill="url(#gFox)"/></svg></button>
        <button class="task open" aria-label="Połączenie"><svg viewBox="0 0 32 32"><path d="M1 0h30v31H1z" fill="#fbfbf6"/><path d="M4 15c6-9 16-9 24-6" fill="none" stroke="#4c9c20" stroke-width="4"/><path d="M9 19c5-6 12-6 18-4" fill="none" stroke="#90c010" stroke-width="3.5"/><path d="M14 22c3-3 7-3 11-1" fill="none" stroke="#c8d808" stroke-width="3"/><circle cx="21" cy="25" r="2.5" fill="#e0d810"/></svg></button>
        <button class="task open current" aria-label="NX"><svg><use href="#nx"/></svg></button>
        <button class="task open" aria-label="Paint"><svg viewBox="0 0 32 32"><path d="M1 19C1 10 10 5 20 8c8 3 8 15 1 18-4 2-4 4-7 3s0-5-4-5-9 2-9-5z" fill="#c8e0f0" stroke="#80a0b8"/><circle cx="7" cy="19" r="2.5" fill="#e84830"/><circle cx="11" cy="14" r="2.5" fill="#58b048"/><circle cx="17" cy="11" r="2.5" fill="#f8a820"/><circle cx="14" cy="20" r="2" fill="#122"/><path d="M27 6l-9 24" stroke="#e08830" stroke-width="3"/><path d="M25 1l7 1-4 7-4-1z" fill="#c89060"/></svg></button>
        <div class="tray">
            <span class="lang">PL</span>
            <svg class="kbd" viewBox="0 0 16 14"><path d="M3 4c3-5 5 1 9-4" fill="none" stroke="#999" stroke-width="1.5"/><rect x="0" y="5" width="16" height="9" rx="1" fill="#ddd"/><path d="M2 8h12M2 10h12M4 12h8" stroke="#555" stroke-dasharray="1.5 1"/></svg>
            <svg class="up" viewBox="0 0 8 5"><path d="M0 4l4-4 4 4z" fill="#e8e8e8"/></svg>
            <svg class="flag" viewBox="0 0 16 16"><path d="M1 0v15" stroke="#fff" stroke-width="1.5"/><path d="M2 2c4-2 5 2 9 0v6c-4 2-5-2-9 0z" fill="#fff"/><circle cx="11" cy="11" r="5" fill="#d81c10"/><path d="M9 9l4 4M13 9l-4 4" stroke="#fff" stroke-width="1.5"/></svg>
            <svg class="vol" viewBox="0 0 14 16"><path d="M0 5h3l4-4v14l-4-4H0z" fill="#fff"/><path d="M9 5c2 2 2 4 0 6" fill="none" stroke="#ccc" stroke-width="1.5"/></svg>
            <div class="clock">07:54<br>2015-01-28</div>
            <button class="peek" aria-label="Pokaż pulpit"></button>
        </div>
    </footer>
</div>

<form class="dialog" onsubmit="return false">
    <div class="dlg-head">
        <button class="dlg-gear" type="button" aria-label="Ustawienia okna"><svg viewBox="0 0 16 16"><circle cx="8" cy="8" r="4.5" fill="none" stroke="#fff" stroke-width="2"/><path d="M8 1v3M8 12v3M1 8h3M12 8h3M3 3l2 2M13 3l-2 2M3 13l2-2M13 13l-2-2" stroke="#fff" stroke-width="2"/><circle cx="8" cy="8" r="1" fill="#fff"/></svg></button>
        <h1>Wizualizacja ścieżki narzędzia</h1>
        <button class="dlg-close" type="button" aria-label="Zamknij okno"><svg viewBox="0 0 16 16"><path d="M4 4l8 8M12 4l-8 8" stroke="#fff" stroke-width="3" stroke-linecap="round"/></svg></button>
    </div>
    <div class="dlg-body">
        <div class="goto-box">
            <ul class="goto">
                <li>GOTO/-66.886,46.740,-9.152,-0.5046540,0.3526520,0.7880</li>
                <li>GOTO/-66.234,47.660,-9.152,-0.4997335,0.3595907,0.7880</li>
                <li>GOTO/-65.569,48.570,-9.152,-0.4947177,0.3664607,0.7880</li>
                <li>GOTO/-64.892,49.471,-9.152,-0.4896075,0.3732608,0.7880</li>
                <li class="current">GOTO/-64.202,50.363,-9.152,-0.4844037,0.3799896,0.7880</li>
                <li>GOTO/-63.500,51.245,-9.152,-0.4791075,0.3866459,0.7880</li>
            </ul>
            <div class="vbar"><i class="tri up-tri"></i><div class="vbar-thumb"></div><i class="tri down-tri"></i></div>
            <div class="hbar"><i class="tri left"></i><div class="hbar-track"><div class="hbar-thumb"></div></div><i class="tri right"></i></div>
        </div>

        <div class="slider">
            <output class="at-pos">1237</output>
            <input type="range" min="1" max="4691" value="1237" aria-label="Pozycja ścieżki">
            <div class="ends"><span>1</span><span>4691</span></div>
        </div>
        <p class="feed">Posuw roboczy (MM/M) 250.000000</p>

        <div class="tabs">
            <button type="button" class="tab active">Odtwórz</button>
            <button type="button" class="tab">Widok 3D</button>
            <button type="button" class="tab">Widok 2D</button>
        </div>
        <div class="tab-panel">
            <p class="line">Opcje wyświetlania</p>
            <div class="line tall"><label for="tool">Tool</label><select id="tool" class="s-tool"><option>Tool</option></select></div>
            <div class="line off"><input type="checkbox" id="c1" disabled><label for="c1">Usuwanie materiału 2D</label></div>
            <div class="line off"><input type="checkbox" id="c2" disabled><label for="c2">Show Previous IPW</label></div>
            <hr>
            <p class="line">Widok ruchów</p>
            <div class="line tall"><label for="path">Ścieżka narzędzia</label><select id="path" class="s-path"><option>Wszystko</option></select></div>
            <div class="line tall"><label for="trace">Tool Trace</label><select id="trace" class="s-trace"><option>Ostrze narzędzia</option></select></div>
            <div class="line tall off"><label for="count">Liczba ruchów</label><input type="text" id="count" class="count" value="10" disabled></div>
            <div class="line off"><input type="checkbox" id="c3" disabled><label for="c3">Pauza po każdym poziomie</label></div>
            <div class="line off"><input type="checkbox" id="c4" disabled><label for="c4">Show Tool Contact</label></div>
            <hr>
            <button type="button" class="btn gouge">Gouge and Collision Settings</button>
        </div>

        <p class="feed">Szybkość animacji</p>
        <div class="slider">
            <output class="at-end">10</output>
            <input type="range" min="1" max="10" value="10" aria-label="Szybkość animacji">
            <div class="ends"><span>1</span><span>10</span></div>
        </div>

        <div class="player">
            <button type="button" class="btn" aria-label="Początek"><svg viewBox="0 0 24 24"><path d="M12 4v16L4 12zM21 4v16l-8-8z" fill="#800000"/><path d="M2 4v16" stroke="#000080" stroke-width="2"/></svg></button>
            <button type="button" class="btn" aria-label="Krok wstecz"><svg viewBox="0 0 24 24"><path d="M17 4v16l-8-8z" fill="#800000"/><path d="M7 4v16" stroke="#000080" stroke-width="2"/></svg></button>
            <button type="button" class="btn" aria-label="Odtwórz wstecz"><svg viewBox="0 0 24 24"><path d="M15 4v16l-8-8z" fill="#800000"/></svg></button>
            <button type="button" class="btn" aria-label="Odtwarzaj"><svg viewBox="0 0 24 24"><path d="M9 4v16l8-8z" fill="#800000"/></svg></button>
            <button type="button" class="btn" aria-label="Krok naprzód"><svg viewBox="0 0 24 24"><path d="M7 4v16l8-8z" fill="#800000"/><path d="M17 4v16" stroke="#000080" stroke-width="2"/></svg></button>
            <button type="button" class="btn" aria-label="Koniec"><svg viewBox="0 0 24 24"><path d="M3 4v16l8-8zM12 4v16l8-8z" fill="#800000"/><path d="M22 4v16" stroke="#000080" stroke-width="2"/></svg></button>
            <button type="button" class="btn" aria-label="Stop" disabled><svg viewBox="0 0 24 24"><path d="M6 6h12v12H6z" fill="#500c10"/></svg></button>
        </div>
        <hr class="foot-line">
        <div class="actions">
            <button type="button" class="btn ok">OK</button>
            <button type="button" class="btn">Anuluj</button>
        </div>
    </div>
    <div class="dlg-foot"></div>
</form>

<script src="passes.js"></script>
</body>
</html>
```
FILE: styles.css
```css
* { box-sizing: border-box; }
body { margin: 0; background: #fff; color: #000; font: 12px/15px "Liberation Sans", Arial, sans-serif; overflow: hidden; }
button { font: inherit; color: inherit; border: 0; padding: 0; background: none; }
input, select { font: inherit; margin: 0; }
a { color: inherit; text-decoration: none; }
p, h1, h2, ul { margin: 0; padding: 0; }
svg { display: block; flex: none; }
.sprite { position: absolute; width: 0; height: 0; }
.desktop { height: 100vh; padding-bottom: 5px; display: flex; flex-direction: column; }

/* title bar */
.titlebar { height: 26px; display: flex; align-items: center; background: #1c1c1c; border-top: 3px solid #55565c; border-bottom: 1px solid #000; color: #fff; padding-left: 3px; flex: none; overflow: hidden; }
.app-icon { width: 16px; height: 16px; margin-right: 4px; }
.app-title { flex: 1; }
.brand { font-weight: bold; font-size: 14px; margin-right: 25px; }
.win-buttons { display: flex; gap: 4px; margin-right: -7px; }
.win-btn { width: 18px; height: 18px; border: 1px solid #777; border-radius: 2px; background: linear-gradient(#666, #3a3a3a 50%, #4a4a4a); }
.win-close { background: linear-gradient(#f08060, #d83010 50%, #f07050); }

/* menu */
.menubar { height: 26px; flex: none; display: flex; align-items: center; gap: 14px; padding-left: 7px; background: linear-gradient(#e9e9e9, #e0e0e0); border-top: 1px solid #fff; border-bottom: 1px solid #b8b8b8; }
.menu-icon { width: 17px; height: 17px; margin-right: -9px; }
.menu-gap { width: 258px; }
.doc-buttons { margin-left: auto; margin-right: -4px; display: flex; gap: 2px; }
.doc-btn { width: 17px; height: 17px; border: 1px solid #888; border-radius: 3px; background: #f2f2f2; }
.doc-btn:disabled { border-color: #c4c4c4; }

/* toolbars */
.ribbon { flex: none; background: linear-gradient(#e0e0e0, #cbcbcb); border-bottom: 2px solid #999; }
.ribbon.bottom { background: linear-gradient(#e6e6e6, #cbcbcb); border-top: 1px solid #fff; border-bottom: 0; }
.tb-row { height: 68px; display: flex; }
.tb-row.small { height: 34px; }
.tb-row.indent { padding-left: 300px; }
.tb-group { display: flex; border-top: 1px solid #f2f2f2; border-right: 1px solid #b4b4b4; border-bottom: 1px solid #b4b4b4; flex: none; }
.grip { width: 3px; margin: 5px 0 3px 4px; flex: none; background: repeating-linear-gradient(#aaa 0 2px, #f4f4f4 2px 4px, #d8d8d8 4px 5px); }
.small .grip { margin-right: 3px; }
.sep { width: 2px; margin: 1px 2px; background: #b8b8b8; border-right: 1px solid #f4f4f4; flex: none; }
.sep.roomy { margin: 1px 5px; }
.arrow { display: block; width: 0; height: 0; border: 3px solid transparent; border-top: 4px solid #000; border-bottom: 0; }
.cmd { width: 70px; padding: 5px 4px 0; display: flex; flex-direction: column; align-items: center; text-align: center; line-height: 15px; }
.cmd svg { width: 24px; height: 24px; margin-bottom: 4px; }
.cmd:disabled { color: #9a9a9a; }
.cmd:disabled svg { opacity: .5; filter: saturate(.7); }
.drop { width: 12px; display: flex; align-items: center; justify-content: center; }
.small .drop { width: 17px; }
.more { width: 14px; display: flex; align-items: flex-end; justify-content: center; padding-bottom: 6px; }
.small .more { width: 13px; }
.tb-gap { width: 302px; }
.ic { width: 26px; display: flex; align-items: center; justify-content: center; }
.ic.wide { width: 30px; }
.ic.sm { width: 23px; }
.ic svg { width: 23px; height: 23px; }
.ic.sm svg { width: 17px; height: 17px; }
.swatch { width: 24px; height: 24px; border: 2px solid #000; border-top-width: 3px; background: #c8c8c8; flex: none; }
.start-cmd { display: flex; align-items: center; gap: 5px; width: 66px; }
.start-cmd svg { width: 23px; height: 23px; margin-left: 1px; }
.find-slot { width: 439px; display: flex; justify-content: flex-end; align-items: center; }
.find { width: 120px; height: 23px; border: 1px solid #aaa; background: #fff; padding: 0 12px; }
.find::placeholder { color: #a0a0a0; }
.find-btn { width: 37px; }

.selection-bar { height: 29px; flex: none; display: flex; align-items: center; background: linear-gradient(#c6c6c6, #dcdcdc 40%, #dadada); border-bottom: 1px solid #aaa; padding-left: 5px; }
.selection-bar .sep { align-self: stretch; margin: 1px 0; }
.sel-field { width: 424px; height: 20px; border: 1px solid #aaa; border-radius: 3px; background: #d4d4d4; }
.selection-bar .ic:not(.sm) svg { width: 20px; height: 20px; }
.bar-end { margin-left: auto; }

/* workspace */
.workspace { flex: 1; min-height: 0; display: flex; overflow: hidden; }
.rail { width: 33px; padding-top: 17px; background: linear-gradient(90deg, #b0b0b0, #a8a8a8 80%, #888); display: flex; flex-direction: column; gap: 2px; align-items: flex-end; flex: none; }
.rail-tab { width: 27px; height: 40px; border: 1px solid #666; border-right: 0; border-radius: 3px 0 0 3px; background: linear-gradient(#d8d8d8, #c4c4c4); display: flex; align-items: center; justify-content: center; flex: none; }
.rail-tab.active { width: 29px; background: #ececec; }
.rail-tab.spaced { margin-top: 12px; }
.rail-tab svg { width: 23px; height: 23px; }
.navigator { width: 477px; flex: none; display: flex; flex-direction: column; background: #e9e9e9; border: 1px solid #777; padding: 2px 9px 0 8px; }
.nav-title { font-size: 12px; line-height: 18px; display: flex; align-items: center; gap: 10px; padding-left: 5px; height: 23px; margin-bottom: 5px; }
.nav-title svg { width: 11px; height: 11px; }
.tree-box { flex: 1; min-height: 0; border: 1px solid #666; background: #fff; display: flex; flex-direction: column; padding: 0 1px; }
.tree-scroll { flex: 1; min-height: 0; overflow: hidden; }
.tree { width: 100%; border-collapse: collapse; table-layout: fixed; }
.tree th { height: 20px; padding: 0 6px; text-align: left; font-weight: normal; background: linear-gradient(#f2f2f2 50%, #dcdcdc); border-bottom: 1px solid #999; border-right: 1px solid #bbb; background-clip: padding-box; }
.tree tbody { background: repeating-linear-gradient(#fff 0 19px, #e4e4e4 19px 20px, #f6f6f6 20px 39px, #e4e4e4 39px 40px); }
.tree td { height: 20px; padding: 0 4px; color: #333; border-right: 1px solid #e2e2e2; white-space: nowrap; overflow: hidden; }
.tree tr > :last-child { border-right: 0; }
.c-name { width: 199px; }
.c-mid { width: 100px; }
.tree .rest td { height: 500px; }
.tree .rest td:first-child { border-right-color: #000; }
.tree td:first-child { padding-left: 3px; }
.tree .picked td + td { background: #3399ff; color: #fff; }
.tree .violet { color: #6a28d0; }
.tree-ic { width: 50px; height: 19px; margin: 0 -14px 0 0; display: inline-block; vertical-align: middle; }
.splitter { height: 18px; display: flex; align-items: center; gap: 4px; }
.splitter::before, .splitter::after { content: ""; flex: 1; border-top: 1px solid #aaa; }
.splitter i { width: 86px; height: 6px; border: 1px solid #aaa; border-top-color: #fff; background: #d4d4d4; }

.hbar { height: 16px; display: flex; align-items: center; gap: 7px; padding: 0 7px; background: #efefef; flex: none; }
.hbar-track { flex: 1; }
.hbar-thumb { height: 14px; width: 84%; border: 1px solid #888; border-radius: 2px; background: linear-gradient(#f0f0f0 50%, #cfcfcf 50%, #e0e0e0); display: flex; align-items: center; justify-content: center; }
.hbar-thumb::after { content: ""; width: 8px; height: 7px; background: repeating-linear-gradient(90deg, #555 0 1px, transparent 1px 3px); }
.nav-thumb { width: 45%; }
.tri { width: 0; height: 0; border: 4px solid transparent; flex: none; }
.tri.left { border-left: 0; border-right-color: #222; }
.tri.right { border-right: 0; border-left-color: #222; }
.up-tri { border-top: 0; border-bottom-color: #222; }
.down-tri { border-bottom: 0; border-top-color: #222; }

.viewport { flex: 1; min-width: 0; position: relative; overflow: hidden; background: #f3fbff; }
.scene { width: 100%; height: 100%; }
.pass { fill: none; stroke: #00ffff; stroke-width: 2.5; }
.pass-hidden { fill: none; stroke: #58a63c; stroke-width: 2.5; opacity: .6; }
.pass-contact { fill: none; stroke: #1fae96; stroke-width: 2.6; opacity: .85; }
.rim { fill: none; stroke: #1a1608; stroke-width: 1; opacity: .85; }
.triad text { font: 12px "Liberation Sans", sans-serif; }
.tip { position: absolute; left: 389px; top: 503px; padding: 4px 7px; border-radius: 5px; line-height: 15px; background: rgba(238, 232, 208, .82); box-shadow: 2px 2px 3px rgba(60, 50, 10, .7); color: #333; white-space: nowrap; }

/* status + taskbar */
.statusbar { height: 22px; flex: none; display: flex; background: #d9d9d9; border-top: 1px solid #f4f4f4; border-bottom: 2px solid #8a8a8a; line-height: 18px; }
.statusbar > * + * { border-left: 1px solid #aaa; }
.cue { flex: 914; }
.status { flex: 912; font-weight: bold; padding-left: 3px; }
.cell-a { width: 20px; }
.cell-b { width: 36px; }
.cell-c { width: 28px; padding: 0 3px; }
.cell-c svg { width: 16px; height: 16px; }
.taskbar { height: 40px; flex: none; display: flex; gap: 4px; background: linear-gradient(#1c2a34, #080d13 12%, #070b12); border-top: 1px solid #6a7a84; padding-bottom: 1px; }
.orb { width: 56px; }
.orb svg { width: 38px; height: 38px; margin-left: 8px; }
.task { width: 58px; display: flex; align-items: center; justify-content: center; border: 1px solid transparent; border-radius: 3px; }
.task.open { border-color: #7a7f84; background: linear-gradient(135deg, #54585c, #2a2e32 50%, #1c2024 51%, #26292c); }
.task.current { border-color: #c8ccd0; background: linear-gradient(135deg, #b8bcc0, #888c90 50%, #6c7074 51%, #8c9094); }
.task svg { width: 32px; height: 32px; }
.tray { margin-left: auto; display: flex; align-items: center; color: #fff; font: 11px/17px "Noto Sans", sans-serif; }
.lang { margin-right: 8px; }
.kbd { width: 16px; height: 14px; margin-right: 13px; }
.up { width: 8px; height: 5px; margin-right: 14px; }
.flag { width: 16px; height: 16px; margin-right: 10px; }
.vol { width: 14px; height: 16px; margin-right: 18px; }
.clock { text-align: center; margin-right: 12px; }
.peek { width: 4px; height: 38px; border-left: 1px solid #888; background: #333; }

/* tool path dialog */
.dialog { position: absolute; left: 84px; top: 1px; width: 350px; }
.dlg-head { height: 21px; display: flex; align-items: stretch; background: linear-gradient(#555, #1c1c1c 45%, #1c1c1c); border: 1px solid #000; border-top-color: #777; border-radius: 6px 6px 0 0; color: #fff; }
.dlg-head h1 { flex: 1; padding-left: 8px; font-size: 14px; line-height: 19px; }
.dlg-gear { width: 21px; border-right: 1px solid #888; padding-left: 3px; }
.dlg-gear svg { width: 15px; height: 15px; }
.dlg-close { width: 21px; border-left: 1px solid #888; padding-left: 2px; }
.dlg-close svg { width: 16px; height: 16px; }
.dlg-body { background: linear-gradient(#eaeaea 90%, #e0e0e0); border: 1px solid #888; border-top: 0; border-bottom: 0; padding: 8px 9px 0 9px; }
.dlg-foot { height: 9px; background: #1c1c1c; border-top: 2px solid #000; border-radius: 0 0 4px 4px; }
.goto-box { margin: 0 0 0 2px; height: 113px; border: 1px solid #666; background: #fff; padding: 1px; display: grid; grid-template-columns: 1fr 16px; grid-template-rows: 93px 16px; }
.goto { list-style: none; overflow: hidden; padding-top: 1px; }
.goto li { white-space: nowrap; }
.goto .current { background: #3399ff; color: #fff; }
.vbar { background: #f0f0f0; display: flex; flex-direction: column; align-items: center; padding: 8px 0; }
.vbar-thumb { width: 14px; height: 38px; margin: 6px 0 auto; border: 1px solid #888; border-radius: 2px; background: linear-gradient(90deg, #f4f4f4 50%, #cfcfcf 50%, #e0e0e0); display: flex; align-items: center; justify-content: center; }
.vbar-thumb::after { content: ""; width: 7px; height: 8px; background: repeating-linear-gradient(#555 0 1px, transparent 1px 3px); }

.slider { padding: 4px 0 0 5px; }
.slider output { display: block; }
.at-pos { padding-left: 74px; }
.at-end { text-align: right; padding-right: 5px; }
.slider input { display: block; appearance: none; width: 314px; height: 18px; margin: 5px 0 3px 3px; background: linear-gradient(#888 0 2px, #fff 2px 3px) 0 8px / 100% 3px no-repeat; }
.slider input::-webkit-slider-thumb { appearance: none; width: 9px; height: 18px; border: 1px solid #345; border-radius: 5px 5px 2px 2px; background: linear-gradient(#e4f8ff, #4cc4f0); }
.ends { display: flex; justify-content: space-between; padding: 0 1px; line-height: 17px; }
.feed { line-height: 15px; margin-top: 5px; }
.tabs { display: flex; margin-top: 3px; align-items: flex-end; height: 23px; }
.tab { height: 21px; width: 63px; border: 1px solid #777; border-bottom: 0; border-radius: 3px 3px 0 0; background: linear-gradient(#e0e0e0, #ccc); margin-right: 1px; }
.tab.active { height: 23px; width: 60px; margin-right: 0; background: #eaeaea; position: relative; z-index: 1; margin-bottom: -1px; }
.tab-panel { height: 393px; margin-right: 2px; border: 1px solid #777; box-shadow: 1px 1px 1px #bbb; padding: 7px 7px 0 5px; background: linear-gradient(#eaeaea 90%, #dcdcdc); }
.line { height: 22px; display: flex; align-items: center; }
p.line { height: 18px; }
.line.tall { height: 25px; justify-content: space-between; }
p.line + .tall { height: 26px; }
.off { color: #999; }
.tab-panel hr { margin: 2px 0; }
hr { border: 0; border-top: 1px solid #aaa; border-bottom: 1px solid #fff; margin: 0; height: 2px; }
.line input[type=checkbox] { appearance: none; width: 16px; height: 16px; margin-right: 2px; border: 1px solid #999; border-radius: 2px; background: linear-gradient(135deg, #ddd, #eee); }
.line select { appearance: none; height: 22px; border: 2px solid #666; border-right-width: 1px; border-bottom-width: 1px; border-radius: 3px; padding: 0 18px 0 2px; color: #000; background-color: #fff; background-image: url("data:image/svg+xml,%3Csvg xmlns='http://www.w3.org/2000/svg' viewBox='0 0 17 19'%3E%3ClinearGradient id='g' x2='0' y2='1'%3E%3Cstop stop-color='%231c58b0'/%3E%3Cstop offset='.5' stop-color='%2378b0ec'/%3E%3Cstop offset='1' stop-color='%23b8dcff'/%3E%3C/linearGradient%3E%3Cpath d='M0 0h17v19H0z' fill='url(%23g)'/%3E%3Cpath d='M3 6h11l-5.5 7z' fill='%23101828'/%3E%3C/svg%3E"); background-repeat: no-repeat; background-position: right center; background-size: 17px 19px; }
.s-tool { width: 97px; }
.s-path { width: 132px; }
.s-trace { width: 116px; }
.count { width: 81px; height: 22px; border: 1px solid #999; border-top-width: 2px; border-radius: 3px; background: #d2d2d2; color: #777; text-align: right; font: 13px "DejaVu Sans Mono", monospace; padding: 0 3px; }
.btn { border: 1px solid #666; border-radius: 3px; background: linear-gradient(#f6f6f6, #e6e6e6 50%, #c8c8c8 52%, #ececec); box-shadow: inset 0 0 0 1px #aaa; }
.gouge { display: block; width: 100%; height: 26px; margin-top: 3px; }
.tab-panel + .feed { margin-top: 8px; }
.player { display: flex; justify-content: center; gap: 4px; padding: 3px 0 7px; }
.player .btn { width: 30px; height: 31px; display: flex; align-items: center; justify-content: center; }
.player svg { width: 24px; height: 24px; }
.player .btn:disabled { opacity: .45; }
.foot-line { margin: 0 -3px; }
.actions { display: flex; justify-content: flex-end; gap: 7px; padding: 4px 7px 11px 0; }
.actions .btn { width: 76px; height: 22px; }
.actions .ok { background: linear-gradient(#c8ecb4, #9cdc80 45%, #58b838 50%, #a8f488); border-color: #2c6c1c; }
```
FILE: passes.js
```js
// zig-zag finishing passes, fanning out slightly towards the bottom
const TOP = 185, BOTTOM = 882, COUNT = 82;
let d = '';
for (let i = 0; i < COUNT; i++) {
    const x1 = 1364.5 - i * 14.6;
    const x2 = 1734 - i * 15.2;
    const cx = (x1 + x2) / 2 - 4;
    d += `M${x1} ${TOP}Q${cx} ${(TOP + BOTTOM) / 2} ${x2} ${BOTTOM}`;
}
document.getElementById('passes').setAttribute('d', d);
```
